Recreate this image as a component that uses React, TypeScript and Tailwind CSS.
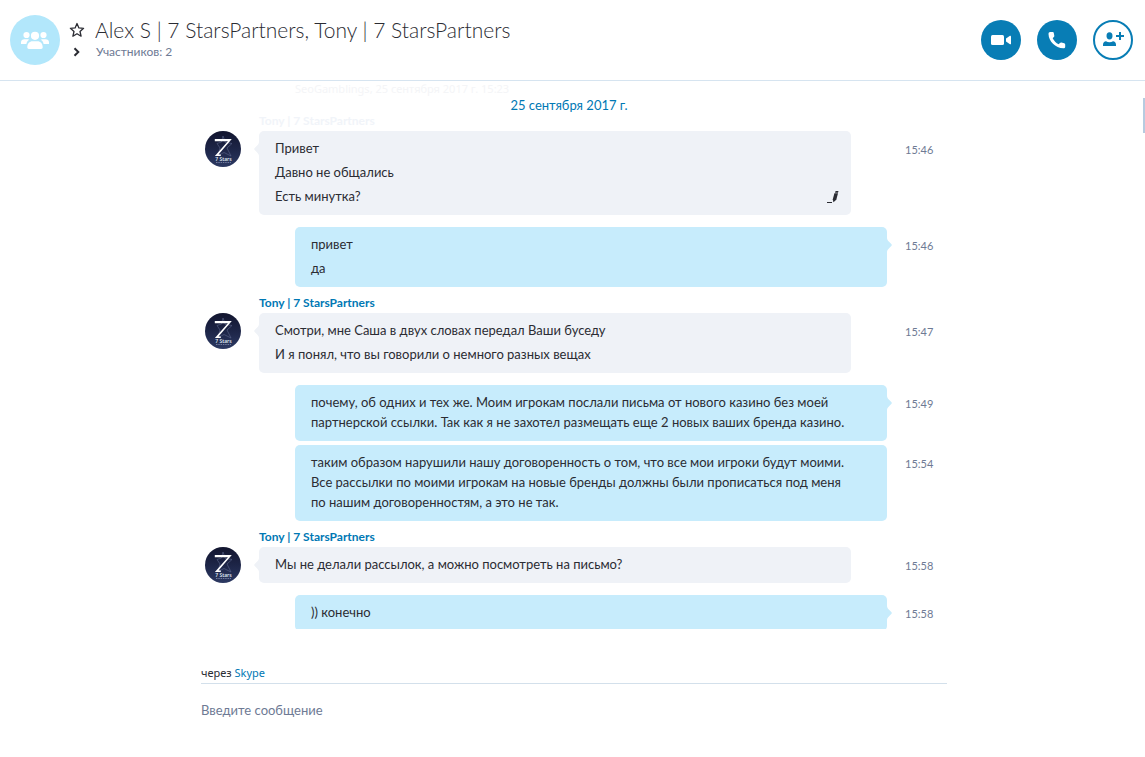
import { useState } from "react";
import clsx from "clsx";

type Message = {
  id: number;
  own: boolean;
  name?: string;
  fadedName?: boolean;
  grouped?: boolean;
  edited?: boolean;
  time: string;
  parts: string[];
};

const messages: Message[] = [
  {
    id: 1,
    own: false,
    name: "Tony | 7 StarsPartners",
    fadedName: true,
    edited: true,
    time: "15:46",
    parts: ["Привет", "Давно не общались", "Есть минутка?"],
  },
  { id: 2, own: true, time: "15:46", parts: ["привет", "да"] },
  {
    id: 3,
    own: false,
    name: "Tony | 7 StarsPartners",
    time: "15:47",
    parts: [
      "Смотри, мне Саша в двух словах передал Ваши буседу",
      "И я понял, что вы говорили о немного разных вещах",
    ],
  },
  {
    id: 4,
    own: true,
    time: "15:49",
    parts: [
      "почему, об одних и тех же. Моим игрокам послали письма от нового казино без моей\nпартнерской ссылки. Так как я не захотел размещать еще 2 новых ваших бренда казино.",
    ],
  },
  {
    id: 5,
    own: true,
    grouped: true,
    time: "15:54",
    parts: [
      "таким образом нарушили нашу договоренность о том, что все мои игроки будут моими.\nВсе рассылки по моими игрокам на новые бренды должны были прописаться под меня\nпо нашим договоренностям, а это не так.",
    ],
  },
  {
    id: 6,
    own: false,
    name: "Tony | 7 StarsPartners",
    time: "15:58",
    parts: ["Мы не делали рассылок, а можно посмотреть на письмо?"],
  },
  { id: 7, own: true, time: "15:58", parts: [")) конечно"] },
];

function GroupIcon() {
  return (
    <svg viewBox="0 0 30 18" className="w-[30px] h-[18px]" fill="#fff" aria-hidden="true">
      <circle cx="6.5" cy="4" r="3.1" />
      <circle cx="23.5" cy="4" r="3.1" />
      <path d="M1 13v-1.800C1 9.400 2.500 8.200 4.500 8.200h3.400C8.500 8.200 9 8.400 9.300 8.700 7.600 9.600 6.600 11.200 6.400 13z" />
      <path d="M29 13v-1.800c0-1.800-1.500-3-3.500-3h-3.400c-.6 0-1.100.2-1.400.5 1.700.9 2.700 2.500 2.900 4.300z" />
      <circle cx="15" cy="4.800" r="4.100" />
      <path d="M7.300 16.200c0-3.700 2.300-6 5.200-6h5c2.900 0 5.200 2.300 5.200 6 0 1-.6 1.700-1.600 1.700H8.900c-1 0-1.600-.7-1.600-1.700z" />
    </svg>
  );
}

function Avatar() {
  return (
    <svg viewBox="0 0 36 36" className="w-9 h-9" role="img" aria-label="7 Stars">
      <defs>
        <linearGradient id="night" x1="0" y1="0" x2="0" y2="1">
          <stop offset="0" stopColor="#12152f" />
          <stop offset="0.5" stopColor="#1d2547" />
          <stop offset="1" stopColor="#2c3962" />
        </linearGradient>
      </defs>
      <circle cx="18" cy="18" r="18" fill="url(#night)" />
      <path
        d="M18 5l2.300 6.500 6.700 1-5 4.500 4 8-7-3.500-6 3 2-7.500-3-4.500 4.500-1.500z"
        fill="none"
        stroke="#5d678c"
        strokeWidth="0.6"
      />
      <path d="M9.800 8h17L13.500 23.400h2.300v1.700H9.900L22.900 10.200H9.800z" fill="#fff" />
      <text x="18.500" y="29.500" textAnchor="middle" fontSize="5" fontWeight="600" fill="#dfe3ee" fontFamily="Noto Sans, sans-serif">
        7 Stars
      </text>
      <path d="M11 31.500h15" stroke="#6f7a9e" strokeWidth="1" strokeDasharray="1.500 0.800" />
    </svg>
  );
}

function PencilIcon() {
  return (
    <svg viewBox="0 0 12 12" className="w-3 h-3" fill="#2b2c33" role="img" aria-label="Изменено">
      <path d="M0 11h5v1H0z" />
      <path d="M8.600 0h2.900l-.5 1.800H8z" />
      <path d="M7.400 2.300H11L9.300 8.800 6.400 11.300 5.800 8.300z" />
    </svg>
  );
}

function MessageRow({ message }: { message: Message }) {
  const { own, name, fadedName, grouped, edited, time, parts } = message;

  return (
    <li className={clsx("flex items-start pl-1", grouped ? "mt-1" : name ? "mt-2" : "mt-3")}>
      <div className={clsx("flex-none", own ? "w-[90px]" : "w-[54px]", name && "pt-[18px]")}>
        {!own && <Avatar />}
      </div>

      <div className={clsx("relative flex-1 min-w-0", own ? "mr-[18px]" : "mr-[54px]")}>
        {name && (
          <div
            className={clsx(
              "h-[18px] text-xs leading-4 font-bold",
              fadedName ? "text-[#f1f4f9]" : "text-[#0078b4]"
            )}
          >
            {name}
          </div>
        )}
        <div
          className={clsx(
            "relative rounded-[5px] px-4 text-[13px] text-[#2b2c33]",
            own ? "bg-[#c7ecfc]" : "bg-[#eff2f7]",
            parts.length > 1 ? "pt-[5px] pb-[7px]" : "pt-[7px] pb-[9px]"
          )}
        >
          {!grouped && (
            <svg
              viewBox="0 0 5 14"
              className={clsx(
                "absolute top-[11px] w-[5px] h-[14px]",
                own ? "left-full fill-[#c7ecfc]" : "right-full fill-[#eff2f7] rotate-180"
              )}
              aria-hidden="true"
            >
              <path d="M0 0c0 2 1.200 3 4.300 6q1 1 0 2C1.200 11 0 12 0 14z" />
            </svg>
          )}
          {parts.map((part) => (
            <p
              key={part}
              className={clsx("whitespace-pre-line", parts.length > 1 ? "leading-6" : "leading-5")}
            >
              {part}
            </p>
          ))}
          {edited && (
            <span className="absolute right-3 bottom-3">
              <PencilIcon />
            </span>
          )}
        </div>
      </div>

      <time
        className={clsx("w-[42px] flex-none text-[11px] leading-4 text-[#6e7a94]", name ? "mt-[29px]" : "mt-[11px]")}
      >
        {time}
      </time>
    </li>
  );
}

export default function App() {
  const [text, setText] = useState("");

  return (
    <div className="flex h-screen flex-col bg-white font-['Lato','Noto_Sans',sans-serif] text-[#2b2c33]">
      <header className="flex flex-none items-center border-b border-[#d6e4f0] pl-[10px] pr-3 h-[81px]">
        <div className="flex h-[50px] w-[50px] flex-none items-center justify-center rounded-full bg-[#b2e7fb]">
          <GroupIcon />
        </div>

        <div className="ml-2 min-w-0 flex-1 pb-1">
          <div className="flex items-center">
            <button type="button" aria-label="Добавить в избранное" className="w-[27px] pl-px">
              <svg viewBox="0 0 16 16" className="h-4 w-4" fill="none" stroke="#2b2c33" strokeWidth="1.3" strokeLinejoin="round">
                <path d="M8 1.500l1.900 4.400 4.700.4-3.600 3.200 1.100 4.700L8 11.700l-4.100 2.500L5 9.500 1.400 6.300l4.700-.4z" />
              </svg>
            </button>
            <h1 className="truncate text-[21px] leading-7 font-light">
              Alex S | 7 StarsPartners, Tony | 7 StarsPartners
            </h1>
          </div>
          <div className="flex items-center">
            <button type="button" aria-label="Показать участников" className="w-7 pl-1">
              <svg viewBox="0 0 10 10" className="h-[10px] w-[10px]" fill="none" stroke="#2b2c33" strokeWidth="2">
                <path d="M2.500 1.200L6.300 5 2.500 8.800" />
              </svg>
            </button>
            <span className="text-xs leading-4 text-[#6e7a94]">Участников: 2</span>
          </div>
        </div>

        <div className="flex flex-none gap-4">
          <button type="button" aria-label="Видеозвонок" className="flex h-10 w-10 items-center justify-center rounded-full bg-[#087db5]">
            <svg viewBox="0 0 20 12" className="h-3 w-5" fill="#fff">
              <rect x="0" y="1" width="13" height="10" rx="1.500" />
              <path d="M15 4.500l4-2.700c.5-.3 1-.1 1 .5v7.400c0 .6-.5.8-1 .5l-4-2.700z" />
            </svg>
          </button>
          <button type="button" aria-label="Аудиозвонок" className="flex h-10 w-10 items-center justify-center rounded-full bg-[#087db5]">
            <svg viewBox="0 0 18 18" className="h-[18px] w-[18px]" fill="#fff">
              <path d="M2.200 1h2.300c.7 0 1.200.4 1.300 1l.5 2.700c.1.600-.1 1-.5 1.400L4.700 7.200c1.200 2.600 3.300 4.700 6 6l1.200-1.200c.4-.4.9-.6 1.500-.5l2.800.7c.7.200 1 .700 1 1.300v2.300c0 1-.8 1.500-1.800 1.500C7.300 16.700.7 10.300.5 2.900.5 1.800 1.100 1 2.200 1z" />
            </svg>
          </button>
          <button type="button" aria-label="Добавить участника" className="flex h-10 w-10 items-center justify-center rounded-full border-2 border-[#087db5]">
            <svg viewBox="0 0 22 16" className="h-4 w-[22px]" fill="#087db5">
              <ellipse cx="7.500" cy="3.800" rx="3" ry="3.600" />
              <path d="M1 14v-1.300c0-2.200 1.300-3.400 3-3.400 1 .6 2.200.9 3.500.9s2.500-.3 3.500-.9c1.700 0 3 1.200 3 3.400V14z" />
              <path d="M17 0h2v3h3v2h-3v3h-2V5h-3V3h3z" />
            </svg>
          </button>
        </div>
      </header>

      <main className="relative min-h-0 flex-1 overflow-hidden pl-[3px]">
        <div className="mx-auto w-full max-w-[746px]">
          <p className="pl-[94px] font-['Noto_Sans',sans-serif] text-[11px] leading-4 text-[#f4f5f7]">
            SeoGamblings, 25 сентября 2017 г. 15:23
          </p>
          <p className="pr-[10px] text-center text-[13px] leading-4 text-[#0078b4]">25 сентября 2017 г.</p>
          <ul className="-mt-2">
            {messages.map((message) => (
              <MessageRow key={message.id} message={message} />
            ))}
          </ul>
        </div>
        <div className="absolute right-0 top-[17px] h-[35px] w-[2px] bg-[#b6cbe0]" />
      </main>

      <footer className="h-32 flex-none pl-[3px]">
        <div className="mx-auto w-full max-w-[746px] pt-9">
          <div className="border-b border-[#d3e0eb] pb-[2px] font-['Noto_Sans',sans-serif] text-[11px] leading-4">
            через{" "}
            <a href="#skype" className="text-[#0078b4]">
              Skype
            </a>
          </div>
          <input
            type="text"
            aria-label="Введите сообщение"
            placeholder="Введите сообщение"
            value={text}
            onChange={(e) => setText(e.target.value)}
            className="mt-4 block w-full text-[13px] leading-5 outline-none placeholder:text-[#6e7a94]"
          />
        </div>
      </footer>
    </div>
  );
}
